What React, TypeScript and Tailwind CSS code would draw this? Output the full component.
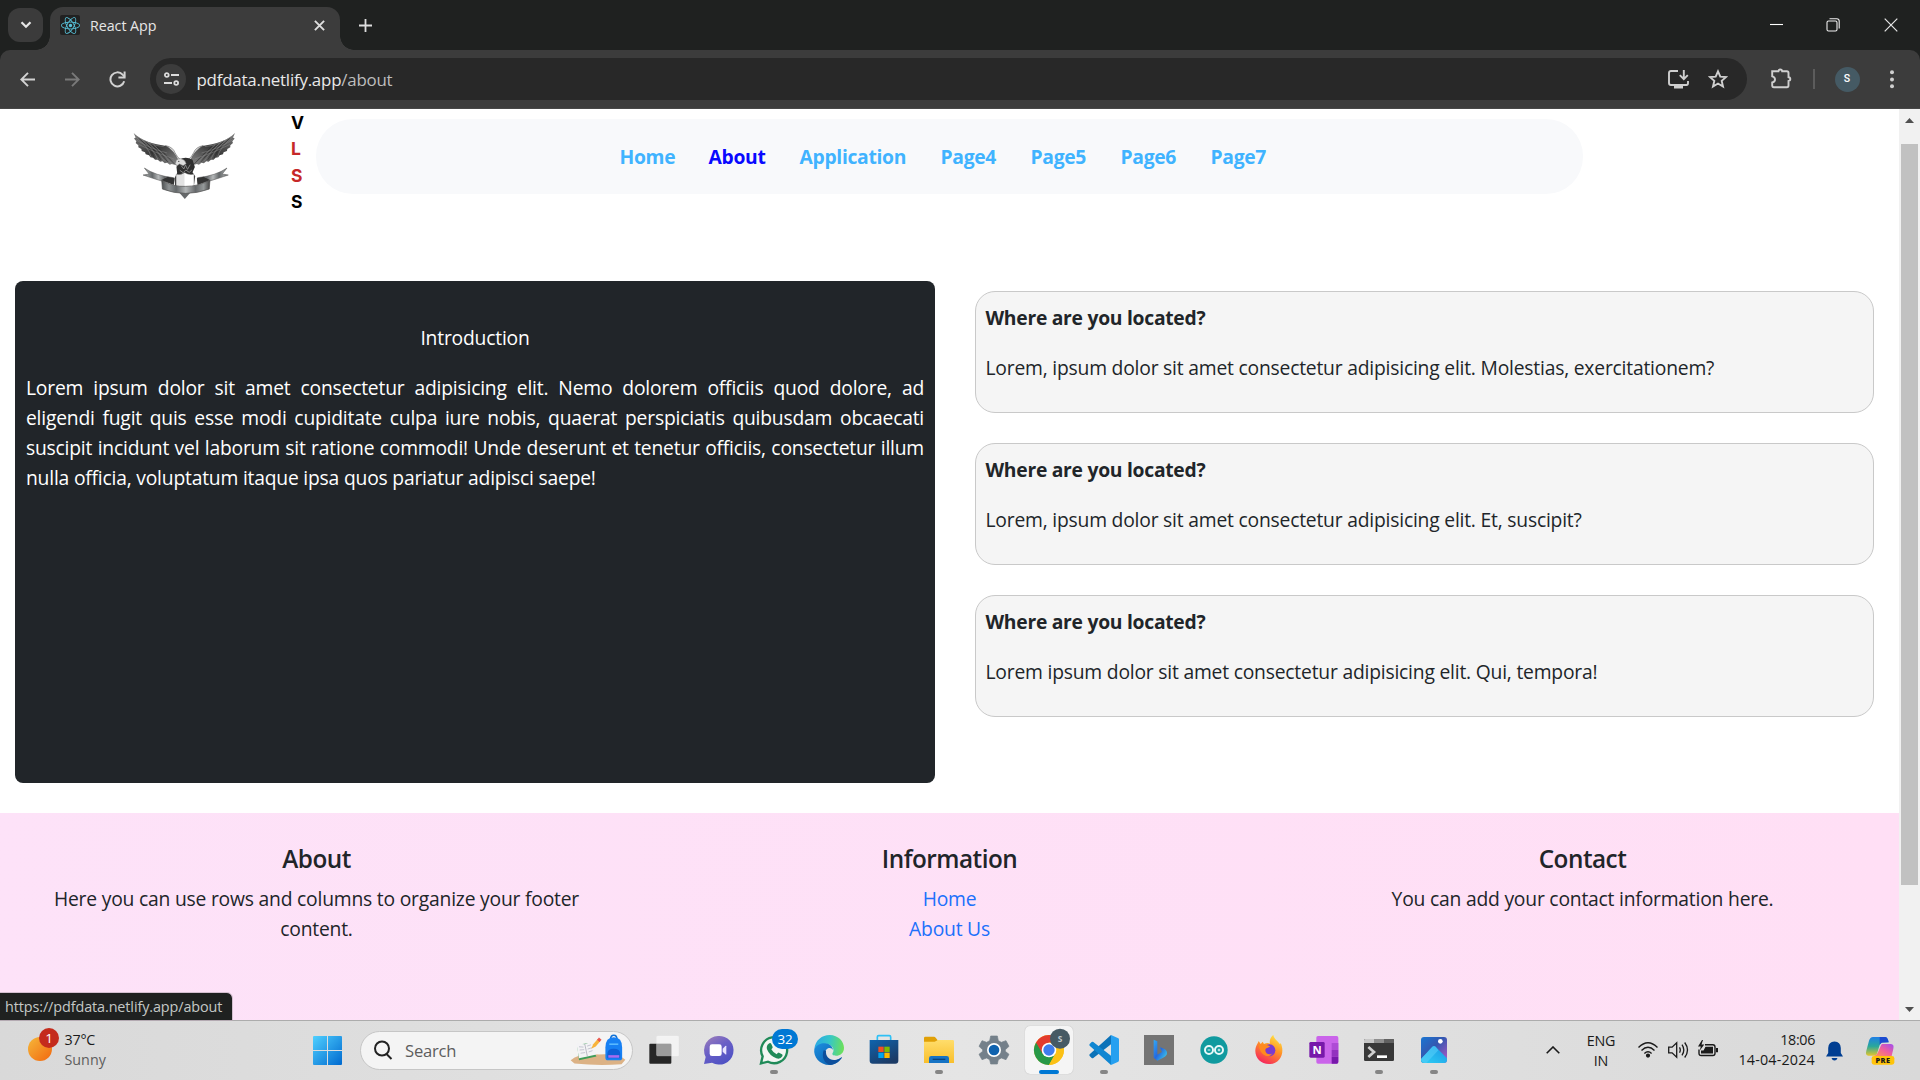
import React, { ReactNode } from 'react';
import { FaReact } from 'react-icons/fa';

const navLinks = [
  { label: 'Home', box: 'w-[89px]' },
  { label: 'About', box: 'w-[91px]', active: true },
  { label: 'Application', box: 'w-[141px]' },
  { label: 'Page4', box: 'w-[90px]' },
  { label: 'Page5', box: 'w-[90px]' },
  { label: 'Page6', box: 'w-[90px]' },
  { label: 'Page7', box: 'w-[58px]' },
];

const faqs = [
  'Lorem, ipsum dolor sit amet consectetur adipisicing elit. Molestias, exercitationem?',
  'Lorem, ipsum dolor sit amet consectetur adipisicing elit. Et, suscipit?',
  'Lorem ipsum dolor sit amet consectetur adipisicing elit. Qui, tempora!',
];

function TitleBar() {
  return (
    <div className="flex h-[50px] bg-[#1f2120]">
      <div className="mt-2 ml-2 flex h-[34px] w-[35px] items-center justify-center rounded-xl bg-[#3b3b3b]">
        <svg width="12" height="8" viewBox="0 0 12 8" fill="none" stroke="#e6e6e6" strokeWidth="2.2">
          <path d="M1.5 1.2 6 5.8 10.5 1.2" />
        </svg>
      </div>
      <div className="-ml-[7px] mt-auto h-[14px] w-[14px] bg-[radial-gradient(circle_at_0_0,transparent_13.5px,#3c3c3c_14px)]" />
      <div className="mt-[7px] flex h-[43px] w-[290px] items-center rounded-t-[13px] bg-[#3c3c3c] pb-[7px]">
        <div className="ml-[10px] flex h-5 w-5 items-center justify-center rounded-[2px] bg-[#212121] text-[#58c4dc]">
          <FaReact size={19} />
        </div>
        <span className="mt-[1px] ml-[10px] text-[14.3px] leading-5 tracking-[-0.06px] text-[#e6e6e6]">React App</span>
        <svg className="mr-[15px] ml-auto" width="11" height="11" viewBox="0 0 11 11" stroke="#dedede" strokeWidth="1.9">
          <path d="M.9.9l9.2 9.2M10.1.9.9 10.1" />
        </svg>
      </div>
      <div className="mt-auto h-[14px] w-[14px] bg-[radial-gradient(circle_at_100%_0,transparent_13.5px,#3c3c3c_14px)]" />
      <svg className="mt-[18.5px] ml-[5px]" width="13" height="13" viewBox="0 0 13 13" stroke="#dedede" strokeWidth="1.8">
        <path d="M6.5 0v13M0 6.5h13" />
      </svg>
      <div className="mr-[22px] ml-auto flex items-center">
        <svg width="13" height="14" viewBox="0 0 13 14" stroke="#fff" strokeWidth="1.1"><path d="M0 6.5h13" /></svg>
        <svg className="ml-[43px]" width="14" height="14" viewBox="0 0 14 14" fill="none" stroke="#f0f0f0" strokeWidth="1.1">
          <rect x="1" y="3" width="10" height="10" rx="1.5" />
          <path d="M3.5.7h7.3q2.4 0 2.4 2.4v7.4" />
        </svg>
        <svg className="ml-[44px]" width="14" height="14" viewBox="0 0 14 14" stroke="#e6e6e6" strokeWidth="1.2">
          <path d="M.7.7l12.6 12.6M13.3.7.7 13.3" />
        </svg>
      </div>
    </div>
  );
}

function Toolbar() {
  return (
    <div className="h-[59px] bg-[#1f2120]">
      <div className="flex h-full items-start rounded-t-[10px] border-b border-[#474747] bg-[#3c3c3c]">
        <div className="mt-2 flex h-[42px] w-[150px] items-center">
          <svg className="ml-5" width="15" height="15" viewBox="0 0 15 15" fill="none" stroke="#d2d2d2" strokeWidth="1.9">
            <path d="M15 7.5H1.5M8 .8 1.3 7.5 8 14.2" />
          </svg>
          <svg className="ml-[30px]" width="15" height="15" viewBox="0 0 15 15" fill="none" stroke="#797979" strokeWidth="1.9">
            <path d="M0 7.5h13.5M7 .8l6.7 6.7L7 14.2" />
          </svg>
          <svg className="ml-[29px]" width="17" height="17" viewBox="0 0 17 17" fill="none" stroke="#d2d2d2" strokeWidth="2">
            <path d="M15.2 10.3A7 7 0 1 1 13.6 3.6L15.8 5.8" />
            <path d="M15.6.6v6H9.4" />
          </svg>
        </div>
        <div className="mt-2 flex h-[42px] w-[1597px] items-center rounded-full bg-[#282828]">
          <div className="ml-[6px] flex h-[30px] w-[30px] items-center justify-center rounded-full bg-[#3c3c3c]">
            <svg width="15" height="14" viewBox="0 0 15 14" fill="none" stroke="#dcdcdc" strokeWidth="1.8">
              <circle cx="2.8" cy="3" r="1.9" />
              <path d="M7 3h8M0 11h8" />
              <circle cx="12.2" cy="11" r="1.9" />
            </svg>
          </div>
          <span className="mt-[1px] ml-[10.5px] text-[16.9px] leading-6 tracking-[-0.22px] text-[#e8e8e8]">
            pdfdata.netlify.app<span className="text-[#bdbdbd]">/about</span>
          </span>
          <svg className="mr-[19.5px] ml-auto" width="21" height="19" viewBox="0 0 21 19" fill="none" stroke="#cfcfcf" strokeWidth="1.9">
            <path d="M10 1H3Q1 1 1 3v10q0 2 2 2h15.500q1.500 0 1.500-2v-2" />
            <path d="M15.800 0v9M11.800 5.200l4 4 4-4" />
            <path d="M6 17h9" strokeWidth="3" />
          </svg>
          <svg className="mr-[19px]" width="20" height="20" viewBox="0 0 20 20" fill="none" stroke="#cfcfcf" strokeWidth="1.9">
            <path d="M10 2.300 12.300 7.600l5.700.5-4.300 3.800 1.300 5.600-5-3-5 3 1.300-5.600L2 8.100l5.700-.5z" />
          </svg>
        </div>
        <div className="mt-2 flex h-[42px] items-center">
          <svg className="-mt-[2px] ml-[24px]" width="21" height="21" viewBox="0 0 21 21" fill="none" stroke="#cfcfcf" strokeWidth="1.9">
            <path d="M1.200 3.300h6.200q.2-1.800 1.900-1.800t1.900 1.800h4.700q1.600 0 1.600 1.600v4.300q1.800.2 1.800 1.900t-1.800 1.900v4.500q0 1.700-1.600 1.700H2.800q-1.600 0-1.600-1.600v-3.200q2.800-.6 2.800-3T1.200 8.300z" />
          </svg>
          <div className="ml-[21px] h-5 w-[1.500px] bg-[#5c5c5c]" />
          <div className="ml-[20px] flex h-[25px] w-[25px] items-center justify-center rounded-full bg-[#455a64] font-['Roboto'] text-[10.500px] leading-none font-medium text-white">S</div>
          <svg className="ml-[29.500px]" width="6" height="19" viewBox="0 0 6 19" fill="#cfcfcf">
            <circle cx="3" cy="2.300" r="2" /><circle cx="3" cy="9.400" r="2" /><circle cx="3" cy="16.300" r="2" />
          </svg>
        </div>
      </div>
    </div>
  );
}

function Eagle() {
  const feathers = [0, 1, 2, 3, 4, 5, 6, 7];
  return (
    <svg className="mt-[23px] ml-[132.500px] h-[68px] w-[103px] shrink-0" viewBox="68 68 308 202">
      <defs>
        <linearGradient id="wing" x1="0" y1="0" x2="1" y2="1">
          <stop offset="0" stopColor="#777" /><stop offset=".5" stopColor="#3a3a3a" /><stop offset="1" stopColor="#8c8c8c" />
        </linearGradient>
        <linearGradient id="band" x1="0" x2="1">
          <stop offset="0" stopColor="#4e5152" /><stop offset=".15" stopColor="#8f9394" /><stop offset=".3" stopColor="#64686a" />
          <stop offset=".5" stopColor="#b4b7b8" /><stop offset=".7" stopColor="#66696b" /><stop offset=".87" stopColor="#95999a" /><stop offset="1" stopColor="#444" />
        </linearGradient>
        <g id="eagleWing">
          <path d="M70 70C90 92 125 102 172 110 188 118 198 138 207 152L202 168 184 163 178 165 170 159 163 161 156 155 149 156 142 150 134 150 128 144 120 143 116 137 106 134 104 128 94 124 93 118 84 113 84 107 76 100 78 95 71 87 76 84Z" fill="url(#wing)" />
          {feathers.map((i) => (
            <path key={i} d={`M${76 + i * 9} ${82 + i * 4}Q${115 + i * 7} ${112 + i * 3} ${122 + i * 10} ${142 + i * 3}`} stroke={i % 2 ? '#262626' : '#8c8c8c'} strokeWidth="1.600" fill="none" />
          ))}
          <path d="M76 78Q120 108 160 111M76 90Q120 118 170 130M84 104Q130 128 190 148" stroke="#8f8f8f" strokeWidth="1.400" fill="none" />
          <path d="M165 108Q188 112 194 130 200 142 210 150L203 152Q190 122 165 108Z" fill="#d9d9d9" stroke="#555" strokeWidth="1.500" />
        </g>
        <g id="ribbonTail">
          <path d="M102 175Q135 198 190 204L188 222Q150 214 125 205L98 196 116 193Z" fill="url(#band)" stroke="#555" strokeWidth="1.500" />
          <path d="M153 211 172 201 192 206 190 226Z" fill="#333" />
        </g>
      </defs>
      <use href="#eagleWing" />
      <use href="#eagleWing" transform="matrix(-1 0 0 1 443 0)" />
      <use href="#ribbonTail" />
      <use href="#ribbonTail" transform="matrix(-1 0 0 1 451 0)" />
      <path d="M206 150Q225 138 246 150L253 172 246 188 254 200 250 228 194 228 192 206 200 190 198 172Z" fill="#2f2f2f" />
      <path d="M212 168l8 10 5-12 6 13 8-14M208 182l10 7 8-8 10 7 8-7" stroke="#929292" strokeWidth="2.500" fill="none" />
      <path d="M196 158Q196 147 210 147 224 149 227 162L218 168 207 163 200 168 194 162Z" fill="#dedede" stroke="#777" strokeWidth="1.500" />
      <circle cx="205" cy="155" r="1.800" fill="#222" />
      <path d="M197 194Q210 198 222 189 235 198 250 194V232H197Z" fill="#e2e2e2" stroke="#999" strokeWidth="1.500" />
      <path d="M222 190Q235 198 249 195V231H222Z" fill="#fff" />
      <path d="M204 246 242 246 223 268Z" fill="#66696b" />
      <path d="M154 212Q190 232 225 230 262 230 298 212L296 238Q260 251 225 251 190 251 156 238Z" fill="url(#band)" stroke="#4a4a4a" strokeWidth="2" />
    </svg>
  );
}

function SiteHeader() {
  return (
    <header className="flex h-[172px] items-start">
      <Eagle />
      <div className="mt-[0.500px] ml-[55.500px] flex w-[25px] flex-col font-['Inter'] text-[17.500px] leading-[26.600px] font-bold text-black">
        <span>V</span>
        <span className="text-[#c62828]">L</span>
        <span className="text-[#c62828]">S</span>
        <span>S</span>
      </div>
      <nav className="mt-[10px] flex h-[75px] w-[1267px] items-center rounded-[37px] bg-[#f8f9fb] pl-[303.500px] text-[19.300px] font-bold tracking-[-0.3px] text-[#40b3ff]">
        {navLinks.map((l) => (
          <a key={l.label} className={`${l.box} ${l.active ? 'text-[#0909ff]' : ''}`}>{l.label}</a>
        ))}
      </nav>
    </header>
  );
}

function WebPage() {
  return (
    <div className="flex h-[911px] w-[1899px] flex-col bg-white text-[19.300px] leading-[30px] tracking-[-0.205px] text-[#212529]">
      <SiteHeader />
      <main className="flex h-[532px] shrink-0 px-[15px]">
        <section className="h-[502px] w-[920px] rounded-[8px] bg-[#212529] px-[11px] pt-[41.500px] text-white">
          <h2 className="text-center">Introduction</h2>
          <p className="mt-5 text-justify">
            Lorem ipsum dolor sit amet consectetur adipisicing elit. Nemo dolorem officiis quod dolore, ad eligendi fugit quis
            esse modi cupiditate culpa iure nobis, quaerat perspiciatis quibusdam obcaecati suscipit incidunt vel laborum sit
            ratione commodi! Unde deserunt et tenetur officiis, consectetur illum nulla officia, voluptatum itaque ipsa quos
            pariatur adipisci saepe!
          </p>
        </section>
        <div className="mt-[10px] ml-10 flex w-[899px] flex-col gap-[30px]">
          {faqs.map((f) => (
            <article key={f} className="h-[122px] rounded-[20px] border border-[#c9c9c9] bg-[#f5f5f5] px-[9.500px] pt-[10.500px]">
              <h3 className="font-bold tracking-[-0.27px]">Where are you located?</h3>
              <p className="mt-5">{f}</p>
            </article>
          ))}
        </div>
      </main>
      <footer className="grid flex-1 grid-cols-3 bg-linear-to-r from-[#fde2f8] to-[#ffdff5] pt-[31px] text-center">
        <div className="px-[45px]">
          <h4 className="mb-[10px] text-[24.300px] font-semibold tracking-[-0.5px]">About</h4>
          <p>Here you can use rows and columns to organize your footer content.</p>
        </div>
        <div>
          <h4 className="mb-[10px] text-[24.300px] font-semibold tracking-[-0.5px]">Information</h4>
          <a className="block text-[#2070fb]">Home</a>
          <a className="block text-[#2070fb]">About Us</a>
        </div>
        <div>
          <h4 className="mb-[10px] text-[24.300px] font-semibold tracking-[-0.5px]">Contact</h4>
          <p>You can add your contact information here.</p>
        </div>
      </footer>
    </div>
  );
}

function Scrollbar() {
  return (
    <div className="flex h-[911px] w-[21px] flex-col items-center bg-[#f1f1f1]">
      <svg className="mt-[9px]" width="9" height="5" viewBox="0 0 9 5"><path d="M0 5 4.500 0 9 5z" fill="#505050" /></svg>
      <div className="mt-[21px] h-[741px] w-[17px] bg-[#c1c1c1]" />
      <svg className="mt-auto mb-[8px]" width="9" height="5" viewBox="0 0 9 5"><path d="M0 0 4.500 5 9 0z" fill="#505050" /></svg>
    </div>
  );
}

function Art({ children }: { children: ReactNode }) {
  return <svg className="h-[30px] w-[30px] overflow-visible" viewBox="0 0 90 90">{children}</svg>;
}

const apps: { name: string; state?: 'open' | 'focus'; art: ReactNode }[] = [
  {
    name: 'task-view',
    art: (<>
      <rect x="1" y="26" width="66" height="60" rx="3" fill="#262626" />
      <rect x="23" y="3" width="66" height="60" rx="3" fill="#f7f7f7" fillOpacity=".78" stroke="#fff" strokeOpacity=".6" />
      <path d="M23 26H64q3 0 3 3V63H26q-3 0-3-3z" fill="#9c9c9c" />
    </>),
  },
  {
    name: 'chat',
    art: (<g transform="translate(-3 0)">
      <linearGradient id="chat" x1="0" y1="0" x2=".6" y2="1"><stop offset="0" stopColor="#a080b8" /><stop offset=".5" stopColor="#6a5fc6" /><stop offset="1" stopColor="#4f52c4" /></linearGradient>
      <path d="M45 3a43 43 0 1 1-18 80L3 87 8 66A43 43 0 0 1 45 3z" fill="url(#chat)" />
      <rect x="20" y="28" width="36" height="35" rx="7" fill="#fff" />
      <path d="M59 41 67 33q3-2 3 1v23q0 3-3 1l-8-8z" fill="#e8e4ff" />
    </g>),
  },
  {
    name: 'whatsapp', state: 'open',
    art: (<>
      <path d="M6 85 11 64A39 39 0 1 1 27 80z" fill="#f2f6f3" stroke="#1f8a58" strokeWidth="7" />
      <path d="M29 26q5-4 8 1l4 9q1 3-4 7 6 11 16 15 4-6 7-5l9 5q3 2 1 6-6 10-18 6-20-7-28-27-3-11 5-17z" fill="#1f8a58" />
      <rect x="39" y="-18" width="78" height="60" rx="30" fill="#0078d4" />
      <text x="78" y="27" textAnchor="middle" fontSize="40" fill="#fff">32</text>
    </>),
  },
  {
    name: 'edge',
    art: (<>
      <linearGradient id="edgeTop" x1="0" x2="1" y1=".3" y2=".4"><stop offset="0" stopColor="#2aa7e6" /><stop offset=".5" stopColor="#35c6c9" /><stop offset="1" stopColor="#6ce05a" /></linearGradient>
      <linearGradient id="edgeLow" x1="0" x2="1" y1="0" y2="1"><stop offset="0" stopColor="#1c8fe0" /><stop offset="1" stopColor="#0b5aa8" /></linearGradient>
      <path d="M1 42C4 15 24 0 47 0 73 0 90 20 90 38 90 54 78 62 66 62 57 62 53 58 56 54 64 42 52 26 36 26 20 26 6 36 1 42z" fill="url(#edgeTop)" />
      <path d="M1 42C10 28 22 24 34 25 48 26 56 36 57 45 54 38 44 36 38 43 26 55 40 78 60 76 70 75 76 71 83 66 86 66 74 88 48 90 18 91-3 66 1 42z" fill="url(#edgeLow)" />
      <path d="M29 46C22 66 30 86 50 90 66 88 79 76 84 67 76 73 68 76 60 75 44 74 34 62 36 47z" fill="#0d4f9c" />
    </>),
  },
  {
    name: 'store',
    art: (<>
      <linearGradient id="store" x1="0" x2=".6" y1="0" y2="1"><stop offset="0" stopColor="#0f64ae" /><stop offset="1" stopColor="#1c3b66" /></linearGradient>
      <path d="M25 20V6q0-4 4-4H61q4 0 4 4V20" fill="none" stroke="#2fc0f5" strokeWidth="5" />
      <path d="M2 15H88V77q0 9-9 9H11q-9 0-9-9z" fill="url(#store)" />
      <path d="M28 35h16v16H28z" fill="#f25022" /><path d="M46 35h16v16H46z" fill="#7fba00" />
      <path d="M28 53h16v16H28z" fill="#00a4ef" /><path d="M46 53h16v16H46z" fill="#ffb900" />
    </>),
  },
  {
    name: 'explorer', state: 'open',
    art: (<>
      <linearGradient id="folder" x1="0" x2="0" y1="0" y2="1"><stop offset="0" stopColor="#ffdd6b" /><stop offset="1" stopColor="#f9bf2c" /></linearGradient>
      <path d="M0 9q0-4 4-4H30q3 0 5 3l6 8V30H0z" fill="#e0a007" />
      <path d="M0 20H32L42 15H86q4 0 4 4V84H0z" fill="url(#folder)" />
      <path d="M15 84V70q0-7 7-7H68q7 0 7 7V84z" fill="#1673c4" />
      <path d="M26 73H64" stroke="#0a437c" strokeWidth="4" />
    </>),
  },
  {
    name: 'settings',
    art: (<>
      <path d="M35 3H55L58 17 67 22 81 17 90 34 79 44V49L90 58 81 74 67 69 58 74 55 87H35L32 74 23 69 9 74 0 58 11 49V44L0 34 9 17 23 22 32 17z" fill="#74808a" stroke="#74808a" strokeWidth="2" strokeLinejoin="round" />
      <circle cx="45" cy="45" r="21" fill="#fff" /><circle cx="45" cy="45" r="16" fill="#0f62ae" />
    </>),
  },
  {
    name: 'chrome', state: 'focus',
    art: (<>
      <circle cx="45" cy="45" r="45" fill="#fbc116" />
      <path d="M45 45 6 22.500A45 45 0 0 0 45 90L64 56z" fill="#279847" />
      <path d="M6 22.500A45 45 0 0 1 84 22.500H45L26 56z" fill="#e33b2e" />
      <path d="M45 23H84A45 45 0 0 1 45 90L64 56z" fill="#fbc116" />
      <circle cx="45" cy="45" r="22" fill="#fff" /><circle cx="45" cy="45" r="17" fill="#3f7ded" />
      <circle cx="78" cy="11" r="30" fill="#465a64" />
      <text x="78" y="20" textAnchor="middle" fontSize="25" fontWeight="700" fill="#c2cbd0">S</text>
    </>),
  },
  {
    name: 'vscode', state: 'open',
    art: (<>
      <path d="M66 0 88 10q2 1 2 4V76q0 3-2 4L66 90z" fill="#26a0f0" />
      <path d="M66 0V28L13 69q-2 2-5 0L2 63q-2-3 0-5z" fill="#0b72b8" />
      <path d="M66 90V62L13 21q-2-2-5 0L2 27q-2 3 0 5z" fill="#0f86d2" />
    </>),
  },
  {
    name: 'bing',
    art: (<>
      <linearGradient id="bing" x1="0" x2="1" y1="0" y2="1"><stop offset="0" stopColor="#33aaf5" /><stop offset=".5" stopColor="#2469e0" /><stop offset="1" stopColor="#45dbe8" /></linearGradient>
      <rect width="90" height="90" fill="#747474" />
      <path d="M29 14 40 19V59L54 51 47 36 62 42q10 7 6 17-3 6-12 10L40 77 29 68z" fill="url(#bing)" />
    </>),
  },
  {
    name: 'arduino',
    art: (<>
      <circle cx="45" cy="45" r="41" fill="#109a9f" />
      <g fill="none" stroke="#e9f8f8" strokeWidth="6"><circle cx="30" cy="45" r="12" /><circle cx="60" cy="45" r="12" /></g>
      <path d="M26 45h8M56 45h8M60 41v8" stroke="#e9f8f8" strokeWidth="3" />
    </>),
  },
  {
    name: 'firefox',
    art: (<>
      <linearGradient id="fox" x1=".8" x2=".3" y1="0" y2="1"><stop offset="0" stopColor="#ffe845" /><stop offset=".45" stopColor="#ff9326" /><stop offset="1" stopColor="#f5235e" /></linearGradient>
      <path d="M45 87C20 87 3 68 4 46 5 32 12 25 14 18L20 27 26 20 30 27Q40 22 48 26C45 14 52 4 58 0 60 12 70 16 78 28L80 24C94 54 78 87 45 87z" fill="url(#fox)" />
      <circle cx="46" cy="46" r="18" fill="#7a3bd0" />
      <path d="M14 30C24 28 36 26 48 34 44 40 34 38 34 46 34 56 46 62 56 55 44 72 18 62 14 30z" fill="#ff8a1f" />
    </>),
  },
  {
    name: 'onenote',
    art: (<>
      <rect x="22" y="3" width="66" height="83" rx="5" fill="#ca64ea" />
      <path d="M68 24H88V45H68z" fill="#ae4bd5" /><path d="M68 45H88V65H68z" fill="#9332bf" /><path d="M68 65H88V81q0 5-5 5H68z" fill="#7719aa" />
      <rect x="1" y="21" width="46" height="47" rx="4" fill="#7719aa" />
      <text x="24" y="57" textAnchor="middle" fontSize="34" fontWeight="700" fill="#fff">N</text>
    </>),
  },
  {
    name: 'terminal', state: 'open',
    art: (<>
      <rect y="12" width="90" height="66" rx="4" fill="#383838" />
      <path d="M4 12H30V24H0V16q0-4 4-4z" fill="#c8c8c8" /><path d="M30 12H60V24H30z" fill="#8f8f8f" /><path d="M60 12H86q4 0 4 4V24H60z" fill="#616161" />
      <path d="M13 36 30 51 13 66" fill="none" stroke="#cfcfcf" strokeWidth="8" /><path d="M39 65H69" stroke="#fff" strokeWidth="8" />
    </>),
  },
  {
    name: 'photos', state: 'open',
    art: (<>
      <linearGradient id="photo" x1="0" x2="1" y1="0" y2="1"><stop offset="0" stopColor="#1976d2" /><stop offset=".45" stopColor="#3457b0" /><stop offset="1" stopColor="#bb58c8" /></linearGradient>
      <linearGradient id="hill" x1="0" x2="1" y1="1" y2="0"><stop offset="0" stopColor="#2fd0f5" /><stop offset="1" stopColor="#1b95e4" /></linearGradient>
      <rect x="6" y="6" width="78" height="78" rx="9" fill="url(#photo)" />
      <path d="M6 72 40 35q5-4 10 0L84 70V75q0 9-9 9H15q-9 0-9-9z" fill="url(#hill)" />
      <path d="M22 84 58 46 50 35q-5-4-10 0L6 72q1 12 16 12z" fill="#55cdf8" fillOpacity=".6" />
      <circle cx="64" cy="19" r="7" fill="#fff" />
    </>),
  },
];

function Taskbar() {
  return (
    <div className="flex h-[60px] items-start border-t border-[#acacac] bg-linear-to-r from-[#d9d9d9] via-[#e5e5e5] to-[#d9d9d9] text-[14.300px] leading-5 text-[#1a1a1a]">
      <svg className="mt-[6px] ml-[27px] h-[36px] w-[33px] overflow-visible" viewBox="0 0 33 36">
        <linearGradient id="sun" x1="0" x2="1" y1="0" y2="1"><stop offset="0" stopColor="#f5b83a" /><stop offset="1" stopColor="#f2670f" /></linearGradient>
        <circle cx="13" cy="22" r="12" fill="url(#sun)" />
        <circle cx="22" cy="11" r="10" fill="#c42b1c" />
        <text x="22" y="16" textAnchor="middle" fontSize="13.500" fill="#fff">1</text>
      </svg>
      <div className="mt-[9px] ml-[4.500px] flex w-[248.500px] flex-col">
        <span className="tracking-[-0.2px]">37°C</span>
        <span className="text-[#5e5e5e]">Sunny</span>
      </div>
      <svg className="mt-[15px] h-[29px] w-[29px]" viewBox="0 0 29 29">
        <linearGradient id="win" gradientUnits="userSpaceOnUse" x1="0" y1="0" x2="29" y2="29"><stop offset="0" stopColor="#4fd0ff" /><stop offset="1" stopColor="#0069cf" /></linearGradient>
        <path d="M1 0h13v14H0V1q0-1 1-1zM15 0h13q1 0 1 1v13H15zM0 15h14v14H1q-1 0-1-1zM15 15h14v13q0 1-1 1H15z" fill="url(#win)" />
      </svg>
      <div className="mt-[9.500px] ml-[18px] flex h-[39px] w-[273px] items-center rounded-full border border-[#c6c6c6] bg-[#f4f4f4]">
        <svg className="ml-[12px]" width="20" height="20" viewBox="0 0 20 20" fill="none" stroke="#222" strokeWidth="2">
          <circle cx="9" cy="8.500" r="7" /><path d="M13.500 14 18.500 19" />
        </svg>
        <span className="mt-[1px] ml-[12px] text-[16.600px] tracking-[-0.2px] text-[#5d5d5d]">Search</span>
        <svg className="mr-[6px] ml-auto h-[32px] w-[56px] shrink-0" viewBox="0 0 174 96">
          <path d="M2 80Q30 56 90 62 150 58 172 78L160 92Q90 98 14 90z" fill="#dcb285" />
          <path d="M22 32 62 26 82 68 28 80z" fill="#3f9c58" />
          <path d="M20 28 46 30 66 22 82 62 54 68 28 74z" fill="#f3f3f5" /><path d="M46 30 54 68" stroke="#9b9baa" strokeWidth="2" />
          <path d="M28 38l14 1M30 48l14-1M33 58l14-2M53 36l12-4M55 45l13-4M58 54l12-4" stroke="#a9aabc" strokeWidth="2" />
          <path d="M66 44 72 30 86 14 94 21 80 37z" fill="#f8b43c" /><path d="M84 16 90 9 98 16 92 23z" fill="#ea5850" />
          <path d="M126 16q0-14 10-14t10 14" fill="none" stroke="#1273d8" strokeWidth="5" />
          <path d="M110 40Q110 8 136 8T162 40V72q0 8-8 8H118q-8 0-8-8z" fill="#1780f3" />
          <path d="M116 60q0-16 20-16t20 16v14H116z" fill="#0d5fd6" /><path d="M119 64h34v8H119z" fill="#a66bf0" /><path d="M122 30h28" stroke="#59b9ff" strokeWidth="5" />
        </svg>
      </div>
      <div className="ml-[3.500px] flex">
        {apps.map((a) => (
          <div key={a.name} className="flex h-[59px] w-[55px] justify-center">
            <div className={`mt-[5px] flex h-[48px] w-[48px] shrink-0 flex-col items-center rounded-[5px] pt-[9px] ${a.state === 'focus' ? 'bg-[#f5f5f5] shadow-[0_0_1px_#aaa]' : ''}`}>
              <Art>{a.art}</Art>
              {a.state === 'open' && <div className="mt-[5px] h-1 w-2 shrink-0 rounded-full bg-[#858585]" />}
              {a.state === 'focus' && <div className="mt-[5px] h-1 w-5 shrink-0 rounded-full bg-[#0078d4]" />}
            </div>
          </div>
        ))}
      </div>
      <svg className="mt-[25px] ml-[84.500px] h-[8px] w-[14px]" viewBox="0 0 14 8" fill="none" stroke="#1a1a1a" strokeWidth="1.600"><path d="M.7 7.300 7 1l6.300 6.300" /></svg>
      <div className="mt-[10px] ml-[26px] flex w-[30px] flex-col items-center tracking-[-0.15px]"><span>ENG</span><span>IN</span></div>
      <svg className="mt-[20px] ml-[22px] h-[17px] w-[20px]" viewBox="0 0 20 17" fill="none" stroke="#1a1a1a" strokeWidth="1.400">
        <path d="M.5 6.500q9.500-9.500 19 0M3.500 9.600q6.500-6.500 13 0M6.400 12.400q3.600-3.400 7.200 0" /><circle cx="10" cy="14.600" r="1.400" fill="#1a1a1a" />
      </svg>
      <svg className="mt-[20px] ml-[10px] h-[18px] w-[21px]" viewBox="0 0 21 18" fill="none" stroke="#1a1a1a" strokeWidth="1.300">
        <path d="M.7 6.200h3.400L8.700 1.800v14.400L4.100 11.800H.7z" /><path d="M11.500 6.300q1.600 2.700 0 5.400M14 3.700q3.600 5.300 0 10.600M16.700 1.500q5.600 7.500 0 15" />
      </svg>
      <svg className="mt-[19px] ml-[9px] h-[18px] w-[20px]" viewBox="0 0 20 18">
        <path d="M7 4.700h7.800q2.200 0 2.200 2.200v6.400q0 2.200-2.200 2.200H3.200Q1 15.500 1 13.300V9.500" fill="none" stroke="#1a1a1a" strokeWidth="1.400" />
        <path d="M7.500 6.700H15v6.800H3V10.500h2.500zM18 8h2v4.200h-2z" fill="#1a1a1a" /><path d="M4 0 0 6.500h2.800L1.800 10.500 6.300 4.500H3.500L5 0z" fill="#1a1a1a" />
      </svg>
      <div className="mt-[9px] ml-[17px] flex w-[80px] flex-col items-end"><span className="tracking-[-0.35px]">18:06</span><span className="tracking-[0.2px] whitespace-nowrap">14-04-2024</span></div>
      <svg className="mt-[20px] ml-[11px] h-[20px] w-[17px]" viewBox="0 0 17 20" fill="#003e92">
        <path d="M8.500.5Q14.500.8 14.800 7v5l2.200 3.500H0L2.200 12V7Q2.500.8 8.500.5zM5.500 17h6q-.8 2.500-3 2.500T5.500 17z" />
      </svg>
      <svg className="mt-[15px] ml-[22px] h-[30px] w-[30px]" viewBox="0 0 90 90">
        <linearGradient id="copA" x1="0" x2="0" y1="0" y2="1"><stop offset="0" stopColor="#1f7fe6" /><stop offset=".5" stopColor="#2aa89a" /><stop offset="1" stopColor="#e2c62e" /></linearGradient>
        <linearGradient id="copB" x1="1" x2="0" y1="0" y2="1"><stop offset="0" stopColor="#a04df0" /><stop offset=".5" stopColor="#f0609c" /><stop offset="1" stopColor="#ff9a4e" /></linearGradient>
        <path d="M24 3H60q8 0 11 16H52Q46 19 42 34L36 53Q33 59 24 59H10Q0 58 4 44L12 14Q15 4 24 3z" fill="url(#copA)" />
        <path d="M44 3H60q8 0 11 16L50 20 44 26z" fill="#1b4ad0" />
        <path d="M52 24H78q10 1 7 14L80 60H24q9 0 14-9L46 32Q48 25 52 24z" fill="url(#copB)" />
        <rect x="20" y="60" width="68" height="26" rx="7" fill="#ffc40a" />
        <text x="54" y="81" textAnchor="middle" fontSize="22" fontWeight="800" letterSpacing="1.500" fill="#1a1a1a">PRE</text>
      </svg>
    </div>
  );
}

export default function App() {
  return (
    <div className="relative h-[1080px] w-[1920px] overflow-hidden font-['Open_Sans','Noto_Sans',sans-serif]">
      <TitleBar />
      <Toolbar />
      <div className="flex">
        <WebPage />
        <Scrollbar />
      </div>
      <Taskbar />
      <div className="absolute bottom-[60px] left-0 flex h-[27px] w-[232px] items-center rounded-tr-[5px] bg-[#1f2120] pl-[5px] text-[14.400px] tracking-[-0.1px] text-[#c4c8c6] outline outline-[#b9a8b6]/60">
        https://pdfdata.netlify.app/about
      </div>
    </div>
  );
}
